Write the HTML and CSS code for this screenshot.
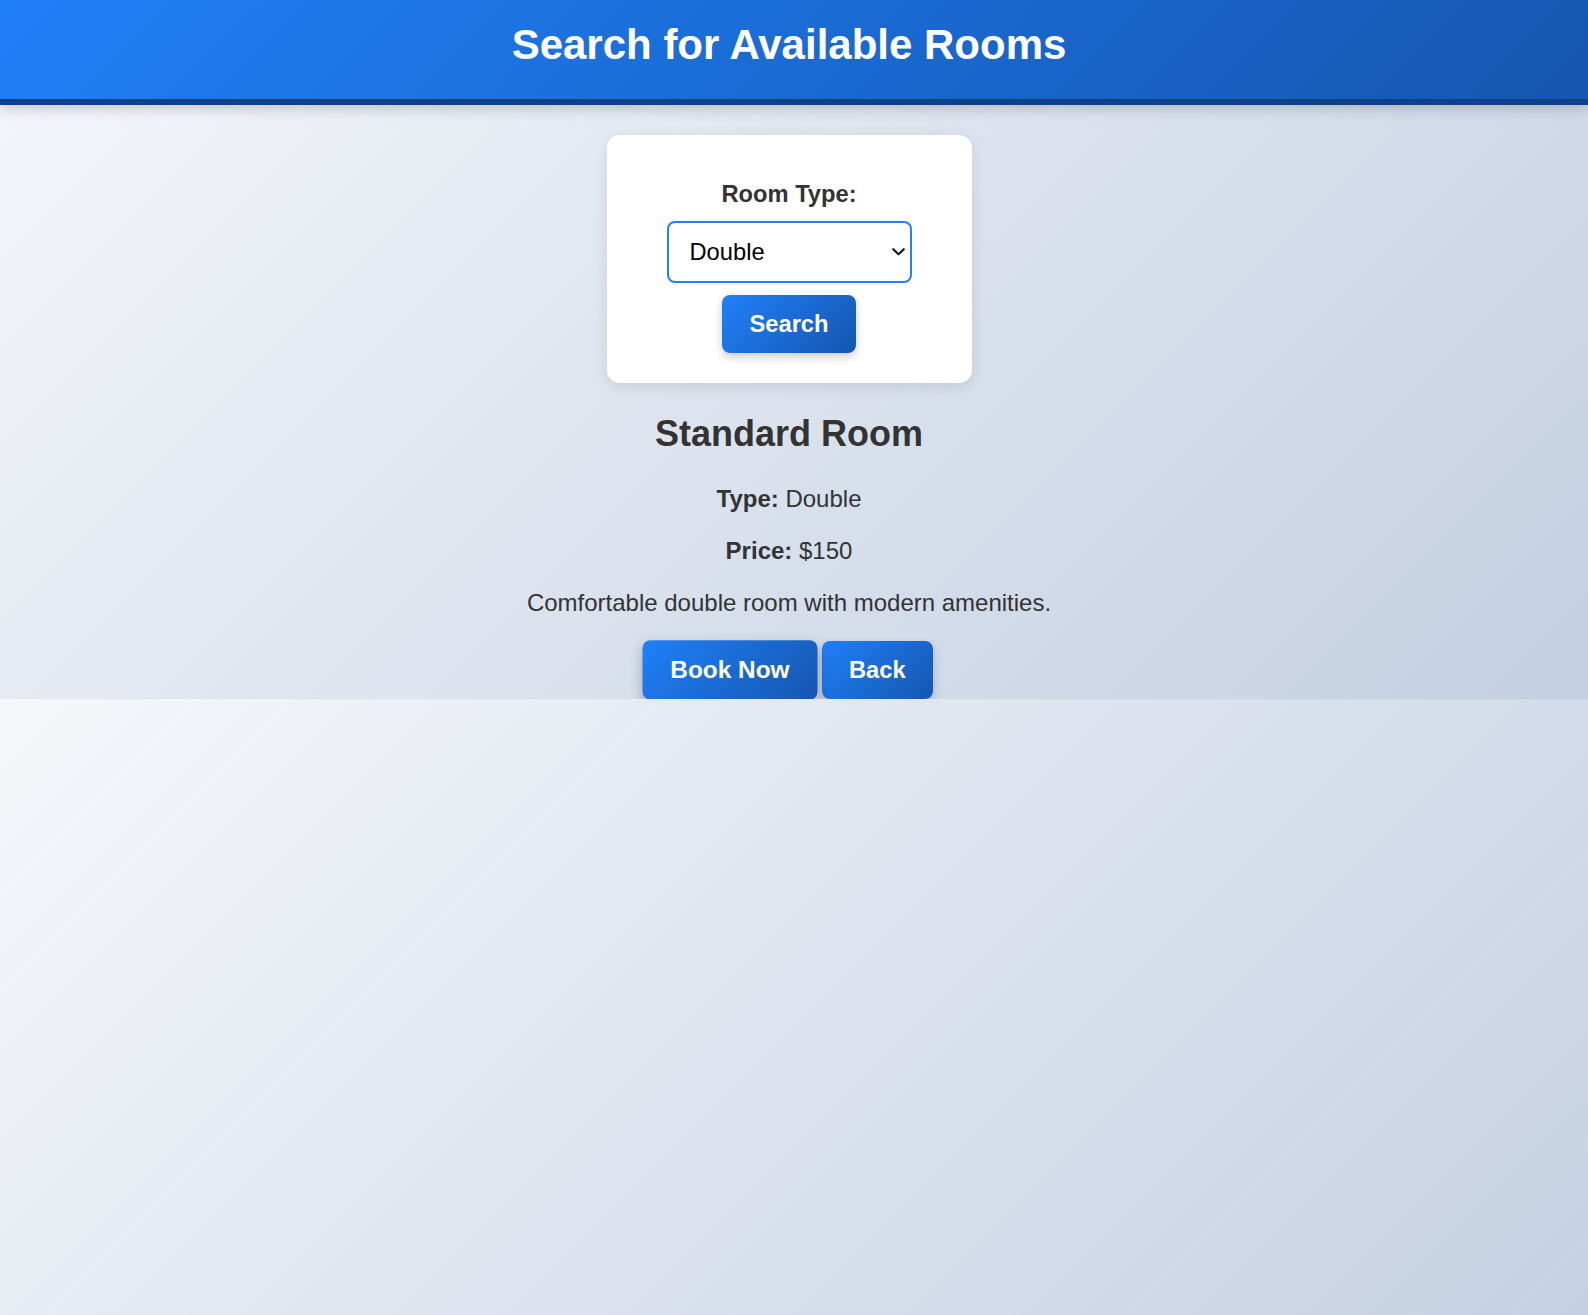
FILE: index.html
```html
<!DOCTYPE html>
<html lang="en">
<head>
<meta charset="utf-8">
<title>Search for Available Rooms</title>
<link rel="stylesheet" href="styles.css">
</head>
<body>
<header class="site-header">
  <h1 class="site-title">Search for Available Rooms</h1>
</header>
<main class="page">
  <form class="search-card">
    <label class="field-label" for="roomType">Room Type:</label>
    <select class="field-select" id="roomType">
      <option>Single</option>
      <option selected>Double</option>
      <option>Suite</option>
    </select>
    <button type="button" class="btn">Search</button>
  </form>
  <section class="room">
    <h2 class="room-name">Standard Room</h2>
    <p class="room-line"><strong>Type:</strong> Double</p>
    <p class="room-line"><strong>Price:</strong> $150</p>
    <p class="room-line">Comfortable double room with modern amenities.</p>
    <div class="actions">
      <button type="button" class="btn btn-active">Book Now</button>
      <button type="button" class="btn">Back</button>
    </div>
  </section>
</main>
</body>
</html>
```
FILE: styles.css
```css
body {
  margin: 0;
  font-family: "Liberation Sans", Arial, sans-serif;
  color: #333;
  background: linear-gradient(135deg, #f5f7fa 0%, #c3cfe2 100%);
}

.site-header {
  background: linear-gradient(135deg, #2080f8 0%, #1556b0 100%);
  border-bottom: 6px solid #0e4187;
  box-shadow: 0 4px 12px rgba(0, 0, 0, 0.18);
  padding: 21px 10px 30px 0;
  text-align: center;
}

.site-title {
  margin: 0;
  color: #fff;
  font-size: 42px;
  font-weight: bold;
  line-height: 48px;
}

.page {
  padding: 30px 10px 0 0;
  text-align: center;
}

.search-card {
  width: 245px;
  margin: 0 auto;
  padding: 46px 60px 30px;
  background: #fff;
  border-radius: 13px;
  box-shadow: 0 4px 15px rgba(0, 0, 0, 0.1);
  display: flex;
  flex-direction: column;
  align-items: center;
}

.field-label {
  font-size: 23.7px;
  font-weight: bold;
  color: #333;
  margin-bottom: 13px;
}

.field-select {
  -webkit-appearance: none;
  appearance: none;
  width: 100%;
  box-sizing: border-box;
  height: 62px;
  font-family: "Liberation Sans", Arial, sans-serif;
  font-size: 23.7px;
  color: #000;
  background-color: #fff;
  background-image: url("data:image/svg+xml,%3Csvg xmlns='http://www.w3.org/2000/svg' width='13' height='8' viewBox='0 0 13 8'%3E%3Cpath d='M1.2 1.2 L6.5 6.3 L11.8 1.2' fill='none' stroke='%23111' stroke-width='2.1' stroke-linecap='round' stroke-linejoin='round'/%3E%3C/svg%3E");
  background-repeat: no-repeat;
  background-position: right 5px center;
  background-size: 13px 8px;
  border: 2px solid #2380f6;
  border-radius: 8px;
  padding: 0 24px 0 21px;
  margin-bottom: 12px;
}

.btn {
  font-family: "Liberation Sans", Arial, sans-serif;
  font-size: 23.7px;
  font-weight: bold;
  color: #fff;
  background: linear-gradient(135deg, #2080f8 0%, #1556b0 100%);
  border: none;
  border-radius: 8px;
  padding: 15.5px 27px;
  line-height: normal;
  box-shadow: 0 4px 10px rgba(0, 0, 0, 0.2);
  cursor: pointer;
}

.btn-active {
  transform: scale(1.03);
  box-shadow: 0 5px 12px rgba(0, 0, 0, 0.25);
}

.room-name {
  font-size: 36px;
  margin: 30px 0;
}

.room-line {
  font-size: 24px;
  margin: 24px 0;
}

.actions {
  font-size: 24px;
}
```
